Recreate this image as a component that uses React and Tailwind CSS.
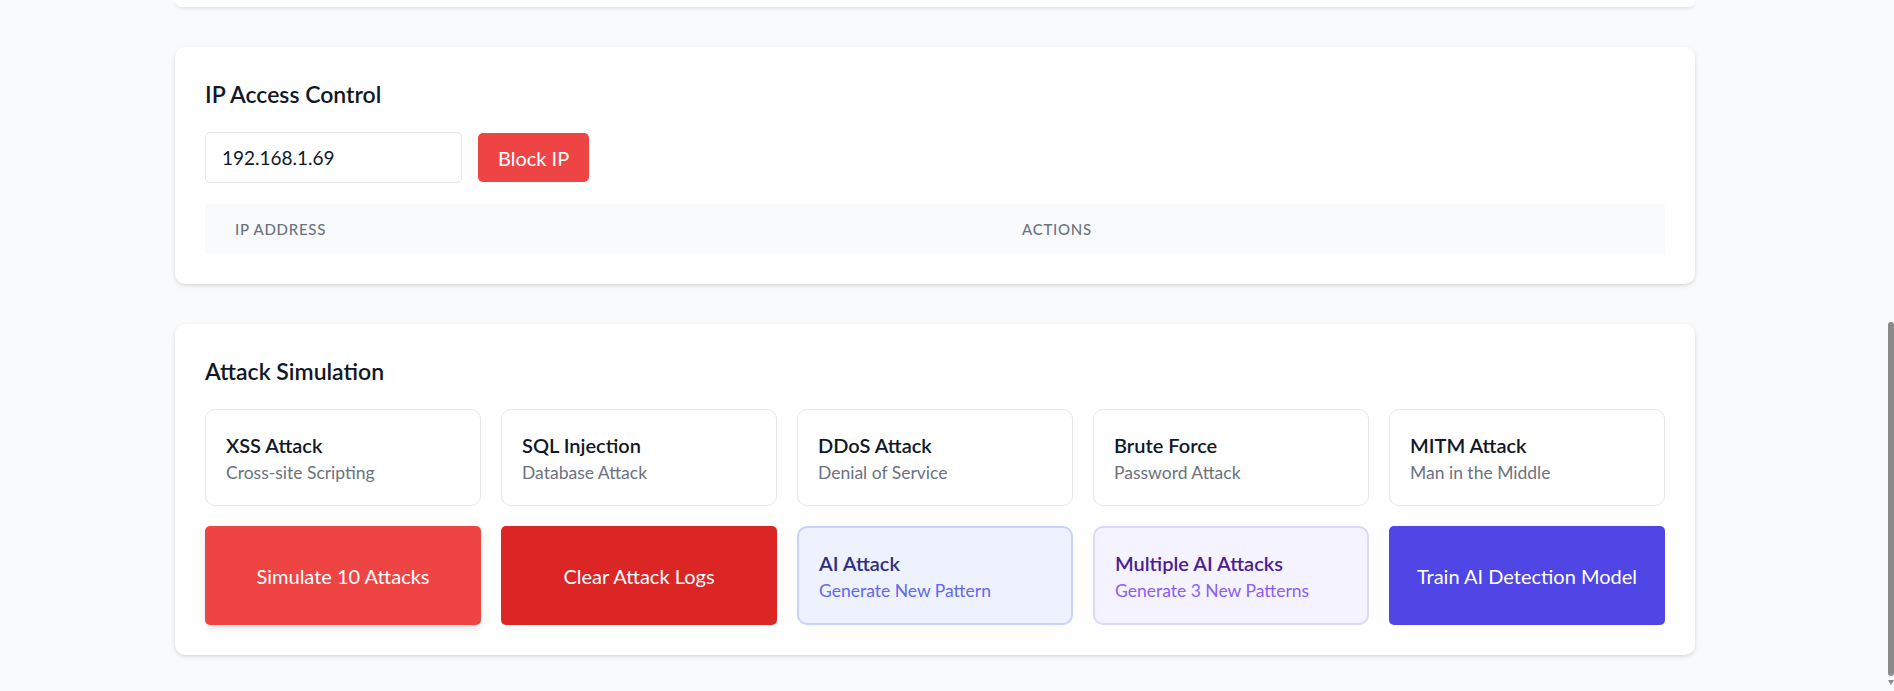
const attacks = [
  { title: 'XSS Attack', desc: 'Cross-site Scripting' },
  { title: 'SQL Injection', desc: 'Database Attack' },
  { title: 'DDoS Attack', desc: 'Denial of Service' },
  { title: 'Brute Force', desc: 'Password Attack' },
  { title: 'MITM Attack', desc: 'Man in the Middle' },
];

const Card = ({ children, className = '' }) => (
  <div className={`bg-white rounded-[10px] shadow-[0_2px_6px_-1px_rgba(0,0,0,0.12),0_1px_3px_rgba(0,0,0,0.06)] p-[30px] ${className}`}>
    {children}
  </div>
);

const IpAccessControl = () => (
  <Card className="mt-[40px]">
    <h2 className="text-[23px] leading-[35px] font-semibold text-[#111827] mb-[20px]">IP Access Control</h2>
    <div className="flex items-center gap-[16px] mb-[21px]">
      <input
        defaultValue="192.168.1.69"
        className="w-[257px] h-[51px] px-[16px] border border-[#e5e7eb] rounded-[5px] text-[19px] text-[#111827] outline-none"
      />
      <button className="h-[49px] px-[20px] bg-[#ef4444] text-white text-[20px] rounded-[5px]">Block IP</button>
    </div>
    <table className="w-full">
      <thead className="bg-[#f9fafb]">
        <tr>
          <th className="w-[787px] px-[30px] py-[15px] text-left text-[15px] leading-[20px] font-medium text-[#6b7280] uppercase tracking-wider">IP Address</th>
          <th className="px-[30px] py-[15px] text-left text-[15px] leading-[20px] font-medium text-[#6b7280] uppercase tracking-wider">Actions</th>
        </tr>
      </thead>
      <tbody></tbody>
    </table>
  </Card>
);

const AttackSimulation = () => (
  <Card className="mt-[40px]">
    <h2 className="text-[23px] leading-[35px] font-semibold text-[#111827] mb-[20px]">Attack Simulation</h2>
    <div className="grid grid-cols-5 gap-[20px]">
      {attacks.map((a) => (
        <div key={a.title} className="border border-[#e5e7eb] rounded-[10px] p-[20px] bg-white">
          <div className="text-[20px] leading-[30px] font-semibold text-[#111827]">{a.title}</div>
          <div className="text-[17.5px] leading-[25px] text-[#6b7280]">{a.desc}</div>
        </div>
      ))}
      <button className="bg-[#ef4444] text-white text-[20px] rounded-[5px] shadow-[0_4px_8px_-2px_rgba(0,0,0,0.15)]">Simulate 10 Attacks</button>
      <button className="bg-[#dc2626] text-white text-[20px] rounded-[5px]">Clear Attack Logs</button>
      <div className="border-2 border-[#c7d2fe] bg-[#eef2ff] rounded-[10px] p-[20px] text-left">
        <div className="text-[20px] leading-[30px] font-semibold text-[#312e81]">AI Attack</div>
        <div className="text-[17.5px] leading-[25px] text-[#6366f1]">Generate New Pattern</div>
      </div>
      <div className="border-2 border-[#ddd6fe] bg-[#f5f3ff] rounded-[10px] p-[20px] text-left">
        <div className="text-[20px] leading-[30px] font-semibold text-[#4c1d95]">Multiple AI Attacks</div>
        <div className="text-[17.5px] leading-[25px] text-[#8b5cf6]">Generate 3 New Patterns</div>
      </div>
      <button className="bg-[#4f46e5] text-white text-[20px] rounded-[5px]">Train AI Detection Model</button>
    </div>
  </Card>
);

export default function App() {
  return (
    <div className="min-h-screen flex bg-[#f9fafb]" style={{ fontFamily: 'Lato, "Noto Sans", sans-serif' }}>
      <div className="flex-1">
        <div className="w-[1600px] mx-auto px-[40px] pb-[36px]">
          <div className="h-[7px] bg-white rounded-b-[10px] shadow-[0_2px_4px_-1px_rgba(0,0,0,0.12)]" />
          <IpAccessControl />
          <AttackSimulation />
        </div>
      </div>
      <div className="w-[24px] flex flex-col items-end">
        <div className="mt-[322px] w-[6px] h-[354px] bg-[#8a8a8a] rounded-[3px]" />
        <div className="mt-[4px] w-0 h-0 border-l-[3px] border-r-[3px] border-t-[5px] border-l-transparent border-r-transparent border-t-[#8a8a8a]" />
      </div>
    </div>
  );
}
